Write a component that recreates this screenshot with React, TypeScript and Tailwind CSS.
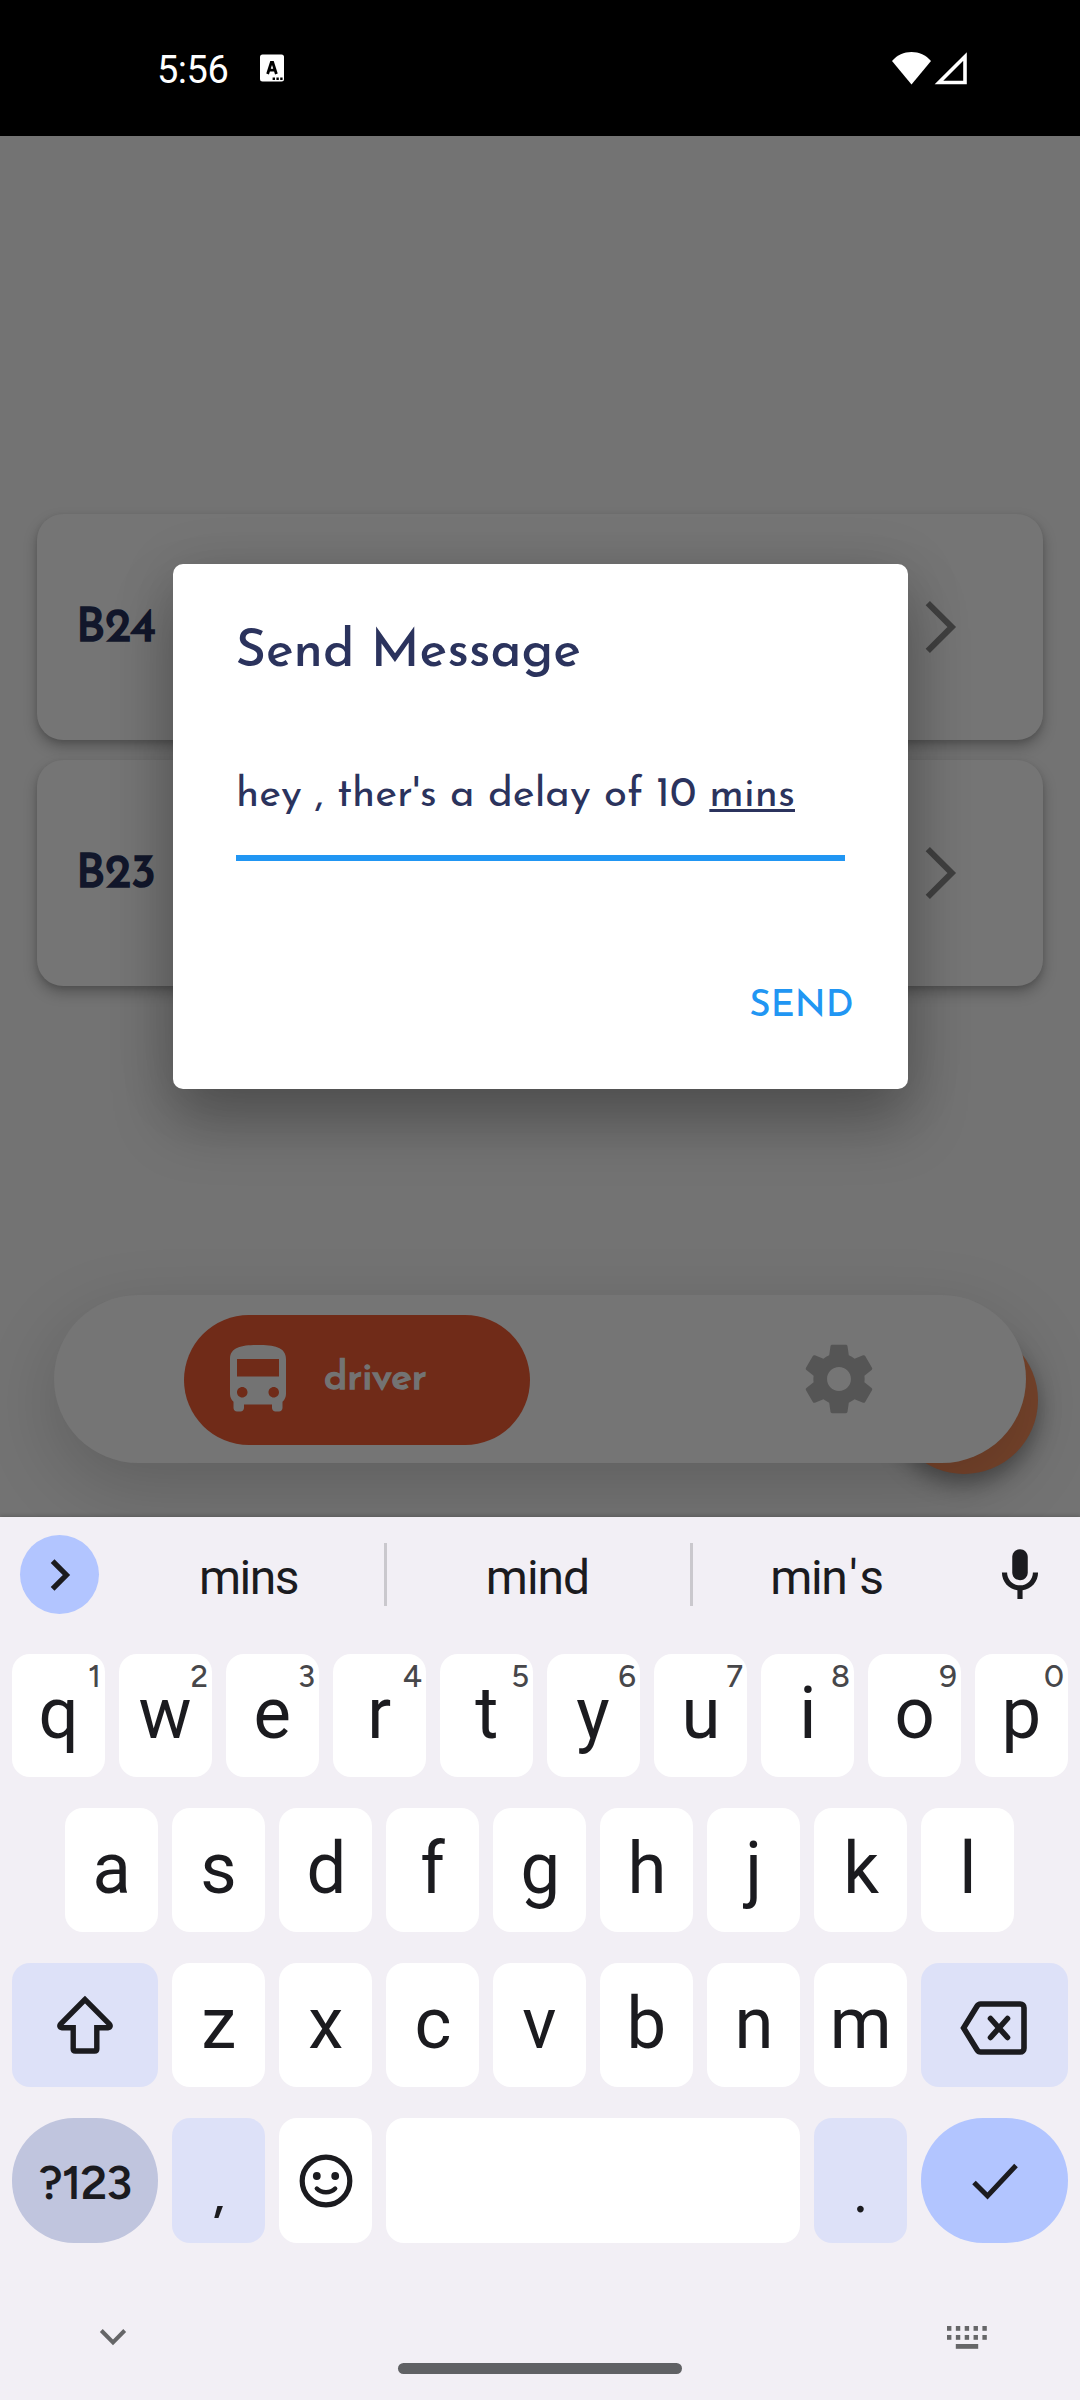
import React from "react";

const josefin = "font-['Josefin_Sans',Lato,sans-serif]";
const figtree = "font-[Figtree,Roboto,sans-serif]";
const ink = "#1b1b1f";

function StatusBar() {
  return (
    <header className="flex h-[136px] shrink-0 items-center bg-black pl-[157px] pr-[113px] text-white">
      <span className="mt-[3px] w-[75px] text-[38px] leading-[44px] tracking-[-0.5px]">5:56</span>
      <svg className="ml-[28px]" width="24" height="28" viewBox="0 0 24 28">
        <rect width="24" height="27" y="0.5" rx="2.5" fill="#fff" />
        <path d="M7.6 20 11.3 8.500h1.400L16.400 20M9 16.200h6" fill="none" stroke="#000" strokeWidth="2.800" />
        <path d="M12.600 23.500h2.400v2.400h-2.400zM16.400 23.500h2.400v2.400h-2.400zM20.200 23.500h2.400v2.400h-2.400z" fill="#000" />
      </svg>
      <div className="ml-auto flex gap-[3px]">
        <svg width="39" height="34" viewBox="0 0 39 34">
          <path d="M19.5 33.5 0 10C5 4 12 1 19.5 1S34 4 39 10z" fill="#fff" />
        </svg>
        <svg width="33" height="34" viewBox="0 0 33 34">
          <path d="M31 5.500v26H5z" fill="none" stroke="#fff" strokeWidth="3.600" />
        </svg>
      </div>
    </header>
  );
}

function BusCard({ name }: { name: string }) {
  return (
    <div className="flex h-[226px] items-center justify-between rounded-[26px] bg-[#757575] pl-[39.5px] pr-[86px] shadow-[0_7px_14px_rgba(0,0,0,0.26),0_2px_5px_rgba(0,0,0,0.1)]">
      <span className={`${josefin} mt-[5px] text-[47.25px] leading-[56px] text-[#12172b] [-webkit-text-stroke:1.7px_#12172b]`}>{name}</span>
      <svg width="34" height="54" viewBox="0 0 34 54">
        <path d="M4.8 3.1 28.8 27l-24 23.9" fill="none" stroke="#404040" strokeWidth="6" />
      </svg>
    </div>
  );
}

function BottomNav() {
  return (
    <div className="relative mx-[54px] mt-[309px] h-[168px]">
      <div className="absolute left-[836px] top-[31px] size-[148px] rounded-full bg-[#75432b] shadow-[0_10px_22px_rgba(0,0,0,0.36)]" />
      <nav className="relative flex h-full items-center rounded-[84px] bg-[#757575] pl-[130px] pr-[146px] shadow-[0_24px_72px_rgba(0,0,0,0.17)]">
        <div className="mt-[1px] flex h-[130px] w-[346px] items-center rounded-[65px] bg-[#702b18] pl-[32px]">
          <svg width="84" height="84" viewBox="0 0 24 24" fill="#737373">
            <path d="M4 16c0 .88.39 1.67 1 2.22V20c0 .55.45 1 1 1h1c.55 0 1-.45 1-1v-1h8v1c0 .55.45 1 1 1h1c.55 0 1-.45 1-1v-1.78c.61-.55 1-1.34 1-2.22V6c0-3.5-3.58-4-8-4s-8 .5-8 4v10zm3.5 1c-.83 0-1.5-.67-1.5-1.5S6.67 14 7.5 14s1.5.67 1.5 1.5S8.33 17 7.5 17zm9 0c-.83 0-1.5-.67-1.5-1.5s.67-1.5 1.5-1.5 1.5.67 1.5 1.5-.67 1.5-1.5 1.5zm1.5-6H6V6h12v5z" />
          </svg>
          <span className={`${josefin} ml-[24px] mt-[-1px] text-[39.4px] leading-[48px] text-[#737373] [-webkit-text-stroke:1.5px_#737373]`}>driver</span>
        </div>
        <svg className="ml-auto" width="82" height="82" viewBox="0 0 24 24" fill="#555555">
          <path d="M19.43 12.98c.04-.32.07-.64.07-.98s-.03-.66-.07-.98l2.11-1.65c.19-.15.24-.42.12-.64l-2-3.46c-.12-.22-.39-.3-.61-.22l-2.49 1c-.52-.4-1.08-.73-1.69-.98l-.38-2.65C14.46 2.18 14.25 2 14 2h-4c-.25 0-.46.18-.49.42l-.38 2.65c-.61.25-1.17.59-1.69.98l-2.49-1c-.23-.09-.49 0-.61.22l-2 3.46c-.13.22-.07.49.12.64l2.11 1.65c-.04.32-.07.65-.07.98s.03.66.07.98l-2.11 1.65c-.19.15-.24.42-.12.64l2 3.46c.12.22.39.3.61.22l2.49-1c.52.4 1.08.73 1.69.98l.38 2.65c.03.24.24.42.49.42h4c.25 0 .46-.18.49-.42l.38-2.65c.61-.25 1.17-.59 1.69-.98l2.49 1c.23.09.49 0 .61-.22l2-3.46c.12-.22.07-.49-.12-.64l-2.11-1.65zM12 15.5c-1.93 0-3.5-1.57-3.5-3.5s1.57-3.5 3.5-3.5 3.5 1.57 3.5 3.5-1.57 3.5-3.5 3.5z" />
        </svg>
      </nav>
    </div>
  );
}

function MessageDialog() {
  return (
    <div className={`${josefin} absolute left-[172.5px] top-[564px] flex h-[524.5px] w-[735px] flex-col rounded-[10px] bg-white pl-[63px] pr-[63px] pt-[59px] text-[#2b335d] shadow-[0_34px_60px_rgba(0,0,0,0.26),0_6px_60px_rgba(0,0,0,0.12)]`}>
      <h1 className="text-[52.5px] leading-[60px] font-medium tracking-[-0.1px] whitespace-nowrap">Send Message</h1>
      <p className="mt-[90px] pl-[0.5px] text-[42px] leading-[46px] whitespace-nowrap">
        hey , ther's a delay of 10 <span className="underline decoration-[2.5px] underline-offset-[3px]">mins</span>
      </p>
      <div className="mt-[36px] h-[6px] bg-[#2196f3]" />
      <button className="mt-[124px] mr-[-9px] self-end text-[36.75px] leading-[44px] font-medium text-[#2196f3]">SEND</button>
    </div>
  );
}

function Key({ label, hint }: { label: string; hint?: string }) {
  return (
    <div className="relative flex w-[93px] items-center justify-center rounded-[18px] bg-white pb-[3px] text-[72px] leading-[80px]">
      <span className="scale-x-[0.98]">{label}</span>
      {hint && <span className={`${figtree} absolute right-[4px] top-[7px] text-[31px] leading-[32px] font-medium text-[#47474a]`}>{hint}</span>}
    </div>
  );
}

function Suggestions() {
  return (
    <div className="flex h-[115px] items-center pl-[20px] pr-[29px] text-[48px] leading-[56px]">
      <div className="flex size-[79px] items-center justify-center rounded-full bg-[#b2c5ff]">
        <svg width="24" height="34" viewBox="0 0 24 34">
          <path d="M4.6 3.2 18.4 17 4.6 30.8" fill="none" stroke={ink} strokeWidth="5.3" />
        </svg>
      </div>
      <span className="ml-[16px] mt-[6px] w-[269px] pr-[2px] text-center tracking-[-1.5px]">mins</span>
      <div className="h-[63px] w-[3px] bg-[#cac8cd]" />
      <span className="mt-[6px] w-[303px] pr-[2px] text-center tracking-[-1px]">mind</span>
      <div className="h-[63px] w-[3px] bg-[#cac8cd]" />
      <span className="mt-[6px] w-[269px] pr-[2px] text-center tracking-[-1.4px]">
        min<span className="mx-[3px]">'</span>s
      </span>
      <svg className="ml-auto" width="62" height="62" viewBox="0 0 24 24" fill={ink}>
        <path d="M12 14c1.66 0 3-1.34 3-3V5c0-1.66-1.34-3-3-3S9 3.34 9 5v6c0 1.66 1.34 3 3 3z" />
        <path d="M17 11c0 2.76-2.24 5-5 5s-5-2.24-5-5H5c0 3.53 2.61 6.43 6 6.92V21.3h2v-3.38c3.39-.49 6-3.39 6-6.92h-2z" />
      </svg>
    </div>
  );
}

function Keyboard() {
  return (
    <section className="relative flex h-[883px] flex-col bg-[#f2eff5] text-[#1b1b1f] shadow-[0_-1px_4px_rgba(0,0,0,0.2)]">
      <Suggestions />
      <div className="mt-[22px] flex h-[123px] gap-[14px] pl-[12px]">
        {[..."qwertyuiop"].map((k, i) => (
          <Key key={k} label={k} hint={String((i + 1) % 10)} />
        ))}
      </div>
      <div className="mt-[31px] flex h-[124px] gap-[14px] pl-[65.4px]">
        {[..."asdfghjkl"].map((k) => (
          <Key key={k} label={k} />
        ))}
      </div>
      <div className="mt-[31px] flex h-[124px] gap-[14px] px-[12px]">
        <div className="flex flex-1 items-center justify-center rounded-[18px] bg-[#dde1f8]">
          <svg width="64" height="64" viewBox="0 0 64 64" fill="none" stroke={ink} strokeWidth="5.4">
            <path d="M32 6.5 7.6 31.2c-1.4 1.5-.8 3.5 1.2 3.5h11.4v21.2c0 1.3.8 2.1 2.1 2.1h19.4c1.3 0 2.1-.8 2.1-2.1V34.7h11.4c2 0 2.6-2 1.2-3.5z" />
          </svg>
        </div>
        {[..."zxcvbnm"].map((k) => (
          <Key key={k} label={k} />
        ))}
        <div className="flex w-[147px] items-center justify-center rounded-[18px] bg-[#dde1f8] pt-[3px] pr-[2px]">
          <svg width="70" height="58" viewBox="0 0 70 58" fill="none" stroke={ink} strokeWidth="5.6">
            <path d="M4.6 30 18 8.2c.9-1.500 2-2.200 3.600-2.200h39.600c2.200 0 3.800 1.600 3.800 3.800v40.400c0 2.200-1.600 3.800-3.800 3.800H21.600c-1.600 0-2.700-.700-3.600-2.200z" />
            <path d="M31.500 20.500 48.500 39.500M48.500 20.500 31.500 39.500" strokeLinecap="round" />
          </svg>
        </div>
      </div>
      <div className="mt-[31px] flex h-[125px] gap-[14px] px-[12px]">
        <div className={`${figtree} flex flex-1 items-center justify-center rounded-[62px] bg-[#c0c5de] pt-[6px] text-[47px] font-semibold tracking-[-1px]`}>?123</div>
        <div className={`${figtree} flex w-[93px] items-end justify-center rounded-[18px] bg-[#dde1f8] pb-[19px] text-[54px] leading-[60px] font-medium`}>,</div>
        <div className="flex w-[93px] items-center justify-center rounded-[18px] bg-white">
          <svg width="54" height="54" viewBox="0 0 54 54" fill="none" stroke={ink}>
            <circle cx="27" cy="27" r="23.8" strokeWidth="5.200" />
            <circle cx="17.800" cy="22" r="3.900" fill={ink} stroke="none" />
            <circle cx="36.200" cy="22" r="3.900" fill={ink} stroke="none" />
            <path d="M17.800 34.500c4.600 5 13.800 5 18.400 0" strokeWidth="4.400" strokeLinecap="round" />
          </svg>
        </div>
        <div className="w-[414px] rounded-[18px] bg-white" />
        <div className={`${figtree} flex w-[93px] items-end justify-center rounded-[18px] bg-[#dde1f8] pb-[19px] text-[54px] leading-[60px] font-medium`}>.</div>
        <div className="flex w-[147px] items-center justify-center rounded-[62px] bg-[#b2c5ff]">
          <svg width="48" height="38" viewBox="0 0 48 38">
            <path d="M3 20.500 16.500 34 45 3.500" fill="none" stroke={ink} strokeWidth="5" />
          </svg>
        </div>
      </div>
      <div className="mt-[83px] flex h-[24px] items-start justify-between pl-[99px] pr-[92px]">
        <svg className="mt-[2px]" width="28" height="20" viewBox="0 0 28 20">
          <path d="M2.300 2.500 14 14.500 25.700 2.500" fill="none" stroke="#666668" strokeWidth="4" />
        </svg>
        <svg width="41" height="24" viewBox="0 0 41 24" fill="#666668">
          {[0, 1, 2, 3, 4].map((c) => (
            <g key={c}>
              <rect x={c * 8.85} y="0" width="4.400" height="4.800" />
              <rect x={c * 8.85} y="9" width="4.400" height="4.800" />
            </g>
          ))}
          <rect x="8.800" y="18" width="22.400" height="4.800" />
        </svg>
      </div>
      <div className="mx-auto mt-[13px] h-[11px] w-[284px] rounded-full bg-[#606164]" />
    </section>
  );
}

export default function App() {
  return (
    <div className="relative flex h-[2400px] w-[1080px] flex-col overflow-hidden bg-[#737373] font-[Roboto,sans-serif]">
      <StatusBar />
      <main className="flex h-[1381px] shrink-0 flex-col pt-[378px]">
        <div className="flex flex-col gap-[20px] pr-[37px] pl-[36.5px]">
          <BusCard name="B24" />
          <BusCard name="B23" />
        </div>
        <BottomNav />
      </main>
      <MessageDialog />
      <Keyboard />
    </div>
  );
}
